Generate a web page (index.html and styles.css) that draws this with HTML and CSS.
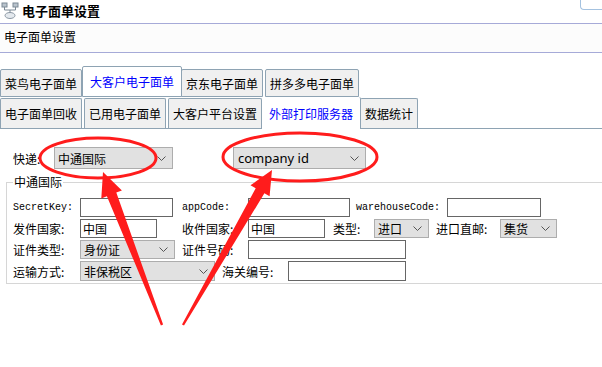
FILE: index.html
```html
<!DOCTYPE html>
<html lang="zh-CN">
<head>
    <meta charset="UTF-8">
    <title>电子面单设置</title>
    <link rel="stylesheet" href="styles.css">
</head>
<body>

<div class="titlebar">
    <svg class="title-icon" width="18" height="18" viewBox="0 0 18 18">
        <rect x="1" y="2" width="5" height="4" fill="#b9c3cc" stroke="#7d8a96" stroke-width="1"/>
        <rect x="12" y="2" width="5" height="4" fill="#b9c3cc" stroke="#7d8a96" stroke-width="1"/>
        <path d="M3.5 6v3h11V6M9 9v3" stroke="#7d8a96" fill="none"/>
        <ellipse cx="9" cy="14.5" rx="5" ry="3" fill="#e4e9ee" stroke="#8a96a2"/>
    </svg>
    <h1>电子面单设置</h1>
    <span class="corner-btn"></span>
</div>

<div class="subbar">电子面单设置</div>

<!-- 两行选项卡 -->
<div class="tabs">
    <div class="tab-row row-back">
        <span class="tab">菜鸟电子面单</span>
        <span class="tab active">大客户电子面单</span>
        <span class="tab">京东电子面单</span>
        <span class="tab">拼多多电子面单</span>
    </div>
    <div class="tab-row row-front">
        <span class="tab">电子面单回收</span>
        <span class="tab">已用电子面单</span>
        <span class="tab">大客户平台设置</span>
        <span class="tab active">外部打印服务器</span>
        <span class="tab">数据统计</span>
    </div>
</div>

<div class="panel">
    <div class="express-row">
        <label class="express-label">快递:</label>
        <div class="combo combo-express">
            <span>中通国际</span>
            <svg class="chevron" width="9" height="5" viewBox="0 0 9 5"><path d="M0.5 0.5l4 4 4-4" fill="none" stroke="#555"/></svg>
        </div>
        <div class="combo combo-company">
            <span>company id</span>
            <svg class="chevron" width="9" height="5" viewBox="0 0 9 5"><path d="M0.5 0.5l4 4 4-4" fill="none" stroke="#555"/></svg>
        </div>
    </div>

    <fieldset class="group">
        <legend>中通国际</legend>
        <div class="rows">
            <div class="row">
                <label class="lbl mono">SecretKey:</label>
                <input class="box w93" type="text">
                <label class="lbl-mid mono gap9">appCode:</label>
                <input class="box w102" type="text">
                <label class="mono gap6 w91">warehouseCode:</label>
                <input class="box w94" type="text">
            </div>
            <div class="row">
                <label class="lbl">发件国家:</label>
                <input class="box w77" type="text" value="中国">
                <label class="lbl-mid gap25">收件国家:</label>
                <input class="box w77" type="text" value="中国">
                <label class="gap8 w41">类型:</label>
                <div class="combo w55">
                    <span>进口</span>
                    <svg class="chevron" width="9" height="5" viewBox="0 0 9 5"><path d="M0.5 0.5l4 4 4-4" fill="none" stroke="#555"/></svg>
                </div>
                <label class="gap7 w64">进口直邮:</label>
                <div class="combo w57">
                    <span>集货</span>
                    <svg class="chevron" width="9" height="5" viewBox="0 0 9 5"><path d="M0.5 0.5l4 4 4-4" fill="none" stroke="#555"/></svg>
                </div>
            </div>
            <div class="row">
                <label class="lbl">证件类型:</label>
                <div class="combo w95">
                    <span>身份证</span>
                    <svg class="chevron" width="9" height="5" viewBox="0 0 9 5"><path d="M0.5 0.5l4 4 4-4" fill="none" stroke="#555"/></svg>
                </div>
                <label class="lbl-mid gap7">证件号码:</label>
                <input class="box w158" type="text">
            </div>
            <div class="row row-last">
                <label class="lbl">运输方式:</label>
                <div class="combo w135">
                    <span>非保税区</span>
                    <svg class="chevron" width="9" height="5" viewBox="0 0 9 5"><path d="M0.5 0.5l4 4 4-4" fill="none" stroke="#555"/></svg>
                </div>
                <label class="lbl-mid gap7">海关编号:</label>
                <input class="box w118" type="text">
            </div>
        </div>
    </fieldset>
</div>

<!-- 截图上的红色标注 -->
<svg class="marks" width="602" height="367" viewBox="0 0 602 367">
    <ellipse cx="98" cy="158" rx="58" ry="20" fill="none" stroke="#ff1c1c" stroke-width="3"/>
    <ellipse cx="300" cy="157" rx="77" ry="24" fill="none" stroke="#ff1c1c" stroke-width="3"/>
    <polygon fill="#ff1c1c" points="103,172 121.9,190.4 116.3,192.6 163.1,324.6 160.9,325.4 106.9,196.2 101.3,198.4"/>
    <polygon fill="#ff1c1c" points="272,170 269.6,196.3 264.4,193.3 184,325.6 182,324.4 255.7,188.3 250.5,185.3"/>
</svg>

</body>
</html>
```

FILE: styles.css
```css
html, body {
    margin: 0;
    background: #fff;
}
body {
    position: relative;
    width: 602px;
    height: 367px;
    overflow: hidden;
    font-family: "Noto Sans CJK SC", "Noto Sans", sans-serif;
    font-size: 12px;
    color: #000;
}
.titlebar {
    display: flex;
    align-items: center;
    box-sizing: border-box;
    height: 24px;
    padding-bottom: 3px;
    border-bottom: 1px solid #a6aad8;
}
.title-icon {
    margin-left: 1px;
}
.titlebar h1 {
    margin: 0 0 0 3px;
    font-size: 13px;
    font-weight: bold;
}
.corner-btn {
    align-self: flex-start;
    margin-left: auto;
    width: 22px;
    height: 10px;
    border: 1px solid #a4c2e0;
    border-top: none;
    border-right: none;
    border-radius: 0 0 0 4px;
    box-sizing: border-box;
}
.subbar {
    box-sizing: border-box;
    height: 29px;
    padding: 4px 0 0 4px;
    line-height: 18px;
    background: #fcfcfc;
    border-bottom: 1px solid #a6aad8;
}

/* tabs */
.tabs {
    margin-top: 13px;
}
.tab-row {
    display: flex;
    align-items: flex-end;
}
.row-back {
    height: 31px;
}
.row-front {
    height: 31px;
    border-bottom: 1px solid #8ea3b3;
}
.tab {
    display: flex;
    align-items: center;
    box-sizing: border-box;
    padding: 0 4px;
    margin-right: 2px;
    background: #f0f0f0;
    border: 1px solid #8ea3b3;
    border-radius: 2px 2px 0 0;
    white-space: nowrap;
}
.row-back .tab {
    height: 28px;
}
.row-front .tab {
    height: 30px;
    border-bottom: none;
}
.tab.active {
    position: relative;
    z-index: 1;
    padding: 0 7px;
    margin: 0 -1px 0 -2px;
    background: #fff;
    color: #0000ff;
}
.row-back .tab.active {
    height: 31px;
}
.row-front .tab.active {
    height: 32px;
    margin-bottom: -1px;
    border-top: none;
    border-left: none;
}

/* panel */
.panel {
    padding: 18px 0 0 6px;
}
.express-row {
    display: flex;
    align-items: center;
    height: 22px;
}
.express-label {
    margin-left: 7px;
    width: 41px;
}
.combo {
    display: flex;
    align-items: center;
    box-sizing: border-box;
    height: 19px;
    padding-left: 3px;
    background: #e1e1e1;
    border: 1px solid #adadad;
}
.combo .chevron {
    margin-left: auto;
    margin-right: 6px;
}
.combo-express {
    width: 119px;
    height: 22px;
}
.combo-company {
    width: 133px;
    height: 22px;
    margin-left: 60px;
    padding-left: 4px;
    font-family: "Noto Sans", sans-serif;
    font-size: 13px;
}
.group {
    margin: 6px -10px 0 0;
    padding: 0 0 2px 6px;
    border: 1px solid #d6d6d6;
    border-right: none;
}
.group legend {
    padding: 0 1px;
    line-height: 14px;
}
.rows {
    padding-top: 9px;
}
.row {
    display: flex;
    align-items: center;
    height: 19px;
    margin-bottom: 2px;
}
.row-last {
    height: 20px;
    margin-bottom: 0;
}
.row-last .combo,
.row-last .box {
    height: 20px;
}
.lbl {
    width: 67px;
}
.lbl-mid {
    width: 66px;
}
.mono {
    font-family: "Liberation Mono", monospace;
    font-size: 10px;
}
.box {
    box-sizing: border-box;
    height: 19px;
    margin: 0;
    padding: 0 2px;
    border: 1px solid #666;
    background: #fff;
    font-family: "Noto Sans CJK SC", sans-serif;
    font-size: 12px;
    outline: none;
}
.gap6 { margin-left: 6px; }
.gap7 { margin-left: 7px; }
.gap8 { margin-left: 8px; }
.gap9 { margin-left: 9px; }
.gap25 { margin-left: 25px; }
.w41 { width: 41px; }
.w55 { width: 55px; }
.w57 { width: 57px; }
.w64 { width: 64px; }
.w77 { width: 77px; }
.w91 { width: 91px; }
.w93 { width: 93px; }
.w94 { width: 94px; }
.w95 { width: 95px; }
.w102 { width: 102px; }
.w118 { width: 118px; }
.w135 { width: 135px; }
.w158 { width: 158px; }

/* annotation overlay */
.marks {
    position: absolute;
    top: 0;
    left: 0;
    pointer-events: none;
}
```
